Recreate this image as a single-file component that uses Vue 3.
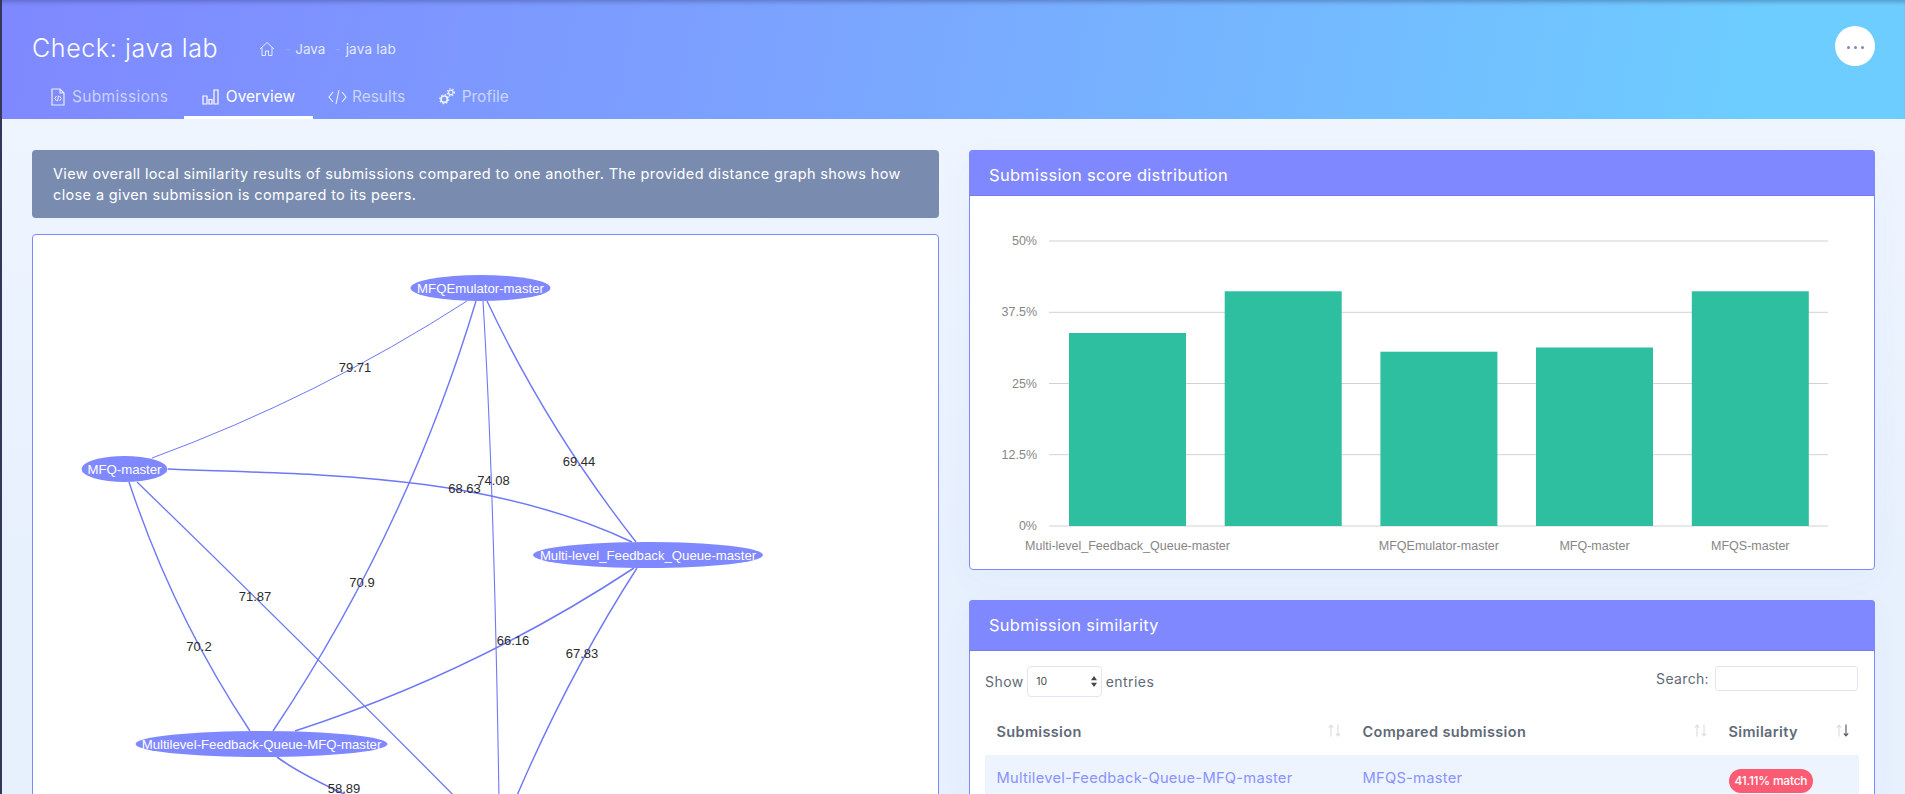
<script setup>
const tabs = [
  { label: 'Submissions', icon: 'file', cls: 't-sub' },
  { label: 'Overview', icon: 'chart', active: true, cls: 't-over' },
  { label: 'Results', icon: 'code', cls: 't-res' },
  { label: 'Profile', icon: 'gears', cls: 't-prof' },
]

const edges = [
  { d: 'M152,458 Q318,397 467,301', w: 1 },
  { d: 'M476,301 Q407,531 273,731', w: 1.4 },
  { d: 'M483,301 Q494,480 499,800', w: 1.1 },
  { d: 'M487,301 Q548,430 636,542', w: 1.4 },
  { d: 'M168,469 C300,475 480,470 632,542', w: 1.5 },
  { d: 'M129,482 Q173,615 250,731', w: 1.4 },
  { d: 'M137,482 Q300,640 470,812', w: 1.3 },
  { d: 'M295,731 Q476,672 634,568', w: 1.5 },
  { d: 'M637,568 Q565,680 510,812', w: 1.4 },
  { d: 'M277,757 Q305,778 380,810', w: 1.6 },
]

const nodes = [
  { x: 124.5, y: 469, rx: 43, label: 'MFQ-master' },
  { x: 480.5, y: 288, rx: 70, label: 'MFQEmulator-master' },
  { x: 648, y: 555, rx: 115, label: 'Multi-level_Feedback_Queue-master' },
  { x: 261.5, y: 744, rx: 126, label: 'Multilevel-Feedback-Queue-MFQ-master' },
]

const edgeLabels = [
  { x: 355, y: 368, t: '79.71' },
  { x: 464.5, y: 489, t: '68.63' },
  { x: 493.5, y: 481, t: '74.08' },
  { x: 579, y: 462, t: '69.44' },
  { x: 255, y: 597, t: '71.87' },
  { x: 362, y: 583, t: '70.9' },
  { x: 199, y: 647, t: '70.2' },
  { x: 513, y: 641, t: '66.16' },
  { x: 582, y: 654, t: '67.83' },
  { x: 344, y: 789, t: '58.89' },
]

const grid = [
  { y: 241, t: '50%' },
  { y: 312.3, t: '37.5%' },
  { y: 383.5, t: '25%' },
  { y: 454.7, t: '12.5%' },
  { y: 526, t: '0%' },
]

const bars = [
  { x: 1069, top: 333, label: 'Multi-level_Feedback_Queue-master' },
  { x: 1224.7, top: 291.3, label: '' },
  { x: 1380.4, top: 351.7, label: 'MFQEmulator-master' },
  { x: 1536, top: 347.5, label: 'MFQ-master' },
  { x: 1691.8, top: 291.3, label: 'MFQS-master' },
]

const heads = [
  { label: 'Submission' },
  { label: 'Compared submission' },
  { label: 'Similarity', on: true },
]
</script>

<template>
  <div class="page">
    <header class="top">
      <div class="title-row">
        <h1 class="title">Check: java lab</h1>
        <nav class="crumbs">
          <svg class="home" viewBox="0 0 16 16" width="16" height="16">
            <path d="M1 8 8 1.5 15 8M3 6.5V14.5H6.5V10H9.5V14.5H13V6.5" fill="none" stroke="currentColor" stroke-width="1" stroke-linejoin="round" />
          </svg>
          <span class="sep">-</span><span>Java</span>
          <span class="sep second">-</span><span class="lab">java lab</span>
        </nav>
        <button class="more" type="button" aria-label="More">
          <i></i><i></i><i></i>
        </button>
      </div>
      <ul class="tabs">
        <li v-for="tab in tabs" :key="tab.label" class="tab" :class="[tab.cls, { active: tab.active }]">
          <svg v-if="tab.icon === 'file'" class="icon" viewBox="0 0 14 18" width="14" height="18">
            <path d="M1 1H9L13 5V17H1Z M9 1V5H13" fill="none" stroke="currentColor" stroke-width="1.2" />
            <path d="M5.5 8 3.8 10.5 5.5 13M8.5 8 10.2 10.5 8.5 13M7.6 7.6 6.4 13.4" fill="none" stroke="currentColor" stroke-width="1" />
          </svg>
          <svg v-else-if="tab.icon === 'chart'" class="icon" viewBox="0 0 17 16" width="17" height="16">
            <path d="M1 7H5V15H1ZM7 10.5H10V15H7ZM12 1H16V15H12Z" fill="none" stroke="currentColor" stroke-width="1.2" />
          </svg>
          <svg v-else-if="tab.icon === 'code'" class="icon" viewBox="0 0 19 16" width="19" height="16">
            <path d="M5 3 1 8 5 13M14 3 18 8 14 13M11 1 8 15" fill="none" stroke="currentColor" stroke-width="1.1" />
          </svg>
          <svg v-else class="icon" viewBox="0 0 16 17" width="16" height="17">
            <circle cx="5.2" cy="11.2" r="3.2" fill="none" stroke="currentColor" stroke-width="1.7" />
            <circle cx="5.2" cy="11.2" r="4.5" fill="none" stroke="currentColor" stroke-width="1.2" stroke-dasharray="1.6 1.9" />
            <circle cx="11.8" cy="4.4" r="2.3" fill="none" stroke="currentColor" stroke-width="1.3" />
            <circle cx="11.8" cy="4.4" r="3.6" fill="none" stroke="currentColor" stroke-width="1.1" stroke-dasharray="1.5 1.5" />
          </svg>
          <span>{{ tab.label }}</span>
        </li>
      </ul>
    </header>

    <main class="content">
      <section class="col">
        <div class="alert">
          View overall local similarity results of submissions compared to one another. The provided distance graph shows how close a given submission is compared to its peers.
        </div>
        <div class="graph-card">
          <svg class="graph" viewBox="33 235 905 600" width="905" height="600">
            <path v-for="(e, i) in edges" :key="i" :d="e.d" fill="none" stroke="#6f78f5" :stroke-width="e.w" />
            <text v-for="l in edgeLabels" :key="l.t" class="edge-label" :x="l.x" :y="l.y + 3.5" text-anchor="middle">{{ l.t }}</text>
            <g v-for="n in nodes" :key="n.label">
              <ellipse :cx="n.x" :cy="n.y" :rx="n.rx" ry="13" fill="#8088ff" />
              <text class="node-label" :x="n.x" :y="n.y + 4.5" text-anchor="middle">{{ n.label }}</text>
            </g>
          </svg>
        </div>
      </section>

      <section class="col">
        <div class="card first">
          <h2 class="card-head">Submission score distribution</h2>
          <svg class="chart" viewBox="970 196 904 373" width="904" height="373">
            <g v-for="g in grid" :key="g.t">
              <line x1="1049" x2="1828" :y1="g.y" :y2="g.y" stroke="#d2d2d2" stroke-width="1" />
              <text class="axis" x="1037" :y="g.y + 4" text-anchor="end">{{ g.t }}</text>
            </g>
            <g v-for="(b, i) in bars" :key="i">
              <rect :x="b.x" :y="b.top" width="117" :height="526 - b.top" fill="#2ebfa0" />
              <text v-if="b.label" class="axis" :x="b.x + 58.5" y="550" text-anchor="middle">{{ b.label }}</text>
            </g>
          </svg>
        </div>

        <div class="card">
          <h2 class="card-head tall">Submission similarity</h2>
          <div class="card-body">
            <div class="controls">
              <label class="show">
                Show
                <span class="select">10<svg viewBox="0 0 6 11" width="6" height="11"><path d="M3 0 6 4.3H0ZM3 11 0 6.7H6Z" fill="#444" /></svg></span>
                entries
              </label>
              <label class="search">
                Search:
                <span class="input"></span>
              </label>
            </div>
            <table class="table">
              <colgroup>
                <col class="c1" /><col class="c2" /><col />
              </colgroup>
              <thead>
                <tr>
                  <th v-for="h in heads" :key="h.label">
                    {{ h.label }}
                    <svg class="sort" :class="{ on: h.on }" viewBox="0 0 13 13" width="13" height="13">
                      <path class="up" d="M3 12.5V1M.8 3.6 3 1 5.2 3.6" fill="none" stroke-width="1.1" />
                      <path class="down" d="M10 .5V12M7.8 9.4 10 12 12.2 9.4" fill="none" stroke-width="1.1" />
                    </svg>
                  </th>
                </tr>
              </thead>
              <tbody>
                <tr>
                  <td><a>Multilevel-Feedback-Queue-MFQ-master</a></td>
                  <td><a>MFQS-master</a></td>
                  <td><span class="badge">41.11% match</span></td>
                </tr>
              </tbody>
            </table>
          </div>
        </div>
      </section>
    </main>
  </div>
</template>

<style>
html, body { margin: 0; height: 794px; overflow: hidden; background: #e9f1fd; }
</style>

<style scoped>
.page {
  box-sizing: border-box;
  width: 1905px;
  height: 794px;
  overflow: hidden;
  font-family: Inter, "Liberation Sans", sans-serif;
  color: #5f6a78;
  background: linear-gradient(180deg, #eef5ff 15%, #e7f0fd 70%);
  position: relative;
}
.page::before {
  content: "";
  position: absolute;
  left: 0; top: 0; bottom: 0;
  width: 2px;
  background: #34375a;
  z-index: 2;
}
.top {
  box-sizing: border-box;
  height: 119px;
  padding: 0 30px 0 32px;
  background: linear-gradient(100deg, #7f88ff 0%, #7ba3ff 42%, #6dcdff 92%);
  box-shadow: inset 0 5px 4px -3px rgba(40, 50, 100, .35);
  display: flex;
  flex-direction: column;
}
.title-row {
  display: flex;
  align-items: center;
  height: 77px;
  padding-top: 16px;
  box-sizing: border-box;
}
.title {
  margin: 2px 0 0;
  font-size: 25px;
  font-weight: 300;
  color: #fff;
  letter-spacing: .62px;
  width: 227px;
}
.crumbs {
  display: flex;
  align-items: center;
  font-size: 13.5px;
  color: rgba(255, 255, 255, .8);
  margin-top: 5px;
}
.home { margin-right: 3px; }
.sep { opacity: .2; padding: 0 4px 0 7px; }
.sep.second { margin-left: 2px; padding-right: 5px; }
.lab { letter-spacing: .2px; }
.more {
  margin-left: auto;
  width: 40px;
  height: 40px;
  border: 0;
  border-radius: 50%;
  background: #fff;
  display: flex;
  align-items: center;
  justify-content: center;
  gap: 4px;
  padding: 3px 0 0;
  margin-top: -1px;
}
.more i { width: 3px; height: 3px; border-radius: 50%; background: #8189b5; }
.tabs {
  list-style: none;
  display: flex;
  margin: 0;
  padding: 0 0 0 1px;
  height: 42px;
}
.tab {
  display: flex;
  align-items: center;
  gap: 7px;
  padding: 0 18px 3px;
  font-size: 15.5px;
  color: rgba(255, 255, 255, .6);
  box-sizing: border-box;
}
.tab .icon { color: rgba(255, 255, 255, .85); }
.tab.active .icon { color: #fff; }
.tab.active {
  color: #fff;
  border-bottom: 3px solid #fff;
  padding-bottom: 0;
}
.t-sub { letter-spacing: .33px; margin-right: -2.5px; }
.t-res { margin-left: -3.2px; gap: 5px; }
.t-prof { margin-left: -2.5px; }
.icon { flex: none; }
.content {
  display: grid;
  grid-template-columns: 907px 906px;
  gap: 30px;
  padding: 31px 30px 0 32px;
}
.col { min-width: 0; }
.alert {
  box-sizing: border-box;
  height: 67.5px;
  padding: 12.5px 21px;
  border-radius: 4px;
  background: #798cb0;
  color: #fff;
  font-size: 14.5px;
  letter-spacing: .37px;
  line-height: 21px;
  margin-bottom: 16.5px;
}
.graph-card {
  box-sizing: border-box;
  height: 700px;
  border: 1px solid #8088ff;
  border-radius: 4px;
  background: #fff;
  overflow: hidden;
}
.graph, .chart { display: block; }
.edge-label { font: 13px "Liberation Sans", Arial, sans-serif; fill: #2b2b2b; }
.node-label { font: 13.2px "Liberation Sans", Arial, sans-serif; fill: #fff; }
.axis { font: 12.5px "Liberation Sans", Arial, sans-serif; fill: #868686; }
.card {
  box-sizing: border-box;
  border: 1px solid #8088ff;
  border-radius: 4px;
  background: #fff;
  box-shadow: 0 8px 35px rgba(60, 90, 220, .03);
}
.card.first { margin-bottom: 30px; }
.card-head {
  box-sizing: border-box;
  margin: -1px -1px 0;
  height: 46px;
  padding: 4px 20px 0;
  display: flex;
  align-items: center;
  background: #8088ff;
  border-bottom: 1px solid #747cf0;
  border-radius: 4px 4px 0 0;
  color: #fff;
  font-size: 16.5px;
  font-weight: 400;
  letter-spacing: .3px;
}
.card-head.tall { height: 51px; padding-top: 0; font-size: 16.4px; }
.card-body { padding: 15px 16px 0 15px; }
.controls {
  display: flex;
  justify-content: space-between;
  align-items: flex-start;
  font-size: 14px;
  height: 45px;
}
.show { display: flex; align-items: center; gap: 3.5px; height: 30px; letter-spacing: .45px; }
.select {
  box-sizing: border-box;
  width: 75px;
  height: 31px;
  border: 1px solid #e1e6f7;
  border-radius: 4px;
  display: flex;
  align-items: center;
  justify-content: space-between;
  padding: 0 4px 0 8px;
  font-size: 10.5px;
  color: #495057;
  letter-spacing: 0;
}
.search { display: flex; align-items: center; gap: 6px; height: 25px; letter-spacing: .35px; }
.input {
  box-sizing: border-box;
  width: 143px;
  height: 25px;
  border: 1px solid #e1e6f7;
  border-radius: 3px;
}
.table {
  width: 873.5px;
  table-layout: fixed;
  border-collapse: collapse;
  font-size: 14.5px;
}
.c1 { width: 366px; }
.c2 { width: 366px; }
.table th {
  position: relative;
  box-sizing: border-box;
  height: 44px;
  padding: 0 11.5px 3px;
  text-align: left;
  font-weight: 600;
  color: #5f6a78;
  letter-spacing: .35px;
}
.table td { height: 46px; padding: 13.5px 11.5px 0; background: #edf4fe; vertical-align: top; box-sizing: border-box; }
.table a { color: #8a92ff; font-size: 14.7px; letter-spacing: .25px; }
.sort {
  position: absolute;
  right: 10px;
  top: 13px;
}
.sort path { stroke: #d9dce0; }
.sort.on .down { stroke: #4a5260; }
.badge {
  display: inline-block;
  background: #fb5b73;
  color: #fff;
  border-radius: 12px;
  padding: 0 6px;
  height: 24px;
  line-height: 24px;
  font-size: 12px;
  letter-spacing: -.25px;
  font-weight: 500;
}
</style>
